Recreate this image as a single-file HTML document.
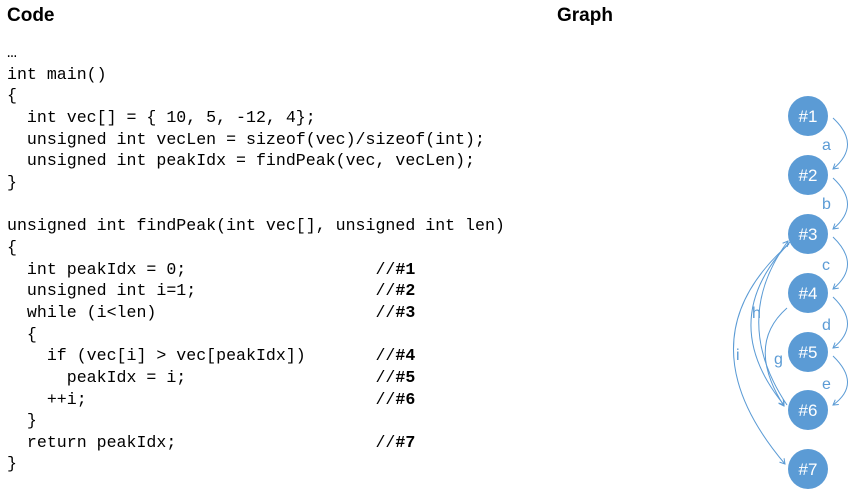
<!DOCTYPE html>
<html><head><style>
body{margin:0;width:859px;height:500px;background:#fff;overflow:hidden;position:relative;font-family:"Liberation Sans",sans-serif}
.h{position:absolute;top:5px;font-weight:bold;font-size:19px;color:#000}
pre{position:absolute;left:7px;top:42px;margin:0;font-family:"Liberation Mono",monospace;font-size:16.6px;line-height:21.65px;color:#000}
svg{position:absolute;left:0;top:0}
</style></head><body>
<div class="h" style="left:7px">Code</div>
<div class="h" style="left:557px">Graph</div>
<pre>…
int main()
{
  int vec[] = { 10, 5, -12, 4};
  unsigned int vecLen = sizeof(vec)/sizeof(int);
  unsigned int peakIdx = findPeak(vec, vecLen);
}

unsigned int findPeak(int vec[], unsigned int len)
{
  int peakIdx = 0;                   //<b>#1</b>
  unsigned int i=1;                  //<b>#2</b>
  while (i&lt;len)                      //<b>#3</b>
  {
    if (vec[i] &gt; vec[peakIdx])       //<b>#4</b>
      peakIdx = i;                   //<b>#5</b>
    ++i;                             //<b>#6</b>
  }
  return peakIdx;                    //<b>#7</b>
}</pre>
<svg width="859" height="500">
<defs><marker id="m" markerWidth="8" markerHeight="8" refX="6" refY="4" orient="auto"><path d="M1,1 L6,4 L1,7" fill="none" stroke="#5b9bd5" stroke-width="1"/></marker></defs>
<g fill="none" stroke="#5b9bd5" stroke-width="1" marker-end="url(#m)">
<path d="M833,118 Q862,145 833,169"/>
<path d="M833,178 Q862,205 833,229"/>
<path d="M833,237 Q862,265 833,289"/>
<path d="M833,297 Q862,325 833,348"/>
<path d="M833,356 Q862,384 833,405"/>
<path d="M787,308 Q745,345 784,406"/>
<path d="M790,242 Q715,320 784,405"/>
<path d="M787,405 Q730,320 788,241"/>
<path d="M789,244 Q680,340 785,464"/>
</g>
<g fill="#5b9bd5" font-size="16">
<text x="822" y="150">a</text><text x="822" y="209">b</text><text x="822" y="270">c</text>
<text x="822" y="330">d</text><text x="822" y="389">e</text>
<text x="774" y="364">g</text><text x="752" y="318">h</text><text x="736" y="360">i</text>
</g>
<g fill="#5b9bd5">
<circle cx="808" cy="116" r="20"/><circle cx="808" cy="175" r="20"/><circle cx="808" cy="234" r="20"/>
<circle cx="808" cy="293" r="20"/><circle cx="808" cy="352" r="20"/><circle cx="808" cy="410" r="20"/><circle cx="808" cy="469" r="20"/>
</g>
<g fill="#fff" font-size="17" text-anchor="middle">
<text x="808" y="122">#1</text><text x="808" y="181">#2</text><text x="808" y="240">#3</text>
<text x="808" y="299">#4</text><text x="808" y="358">#5</text><text x="808" y="416">#6</text><text x="808" y="475">#7</text>
</g>
</svg>
</body></html>
